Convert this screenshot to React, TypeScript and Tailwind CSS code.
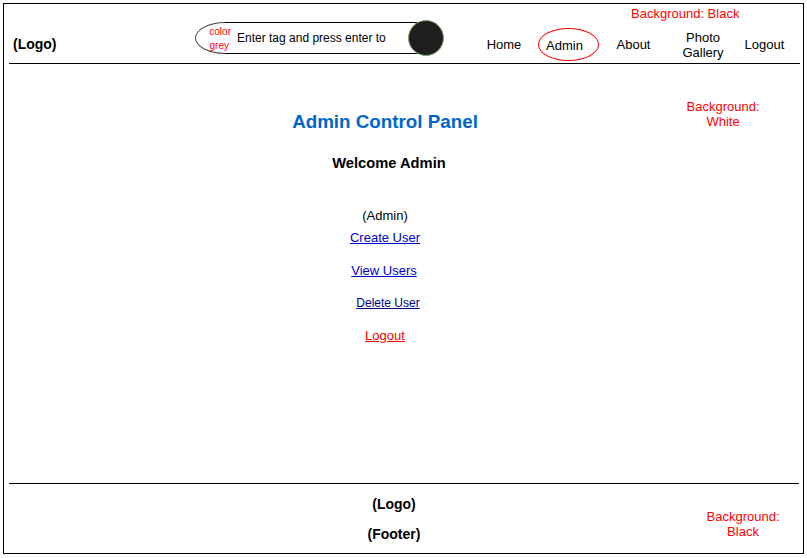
import React from "react";

const navItem = "w-[60px] text-center text-[13px] leading-[15px] text-black";

function SearchBox() {
    return (
        <div className="flex items-center h-[37px]">
            {/* left rounded cap with the colour note */}
            <div className="w-[30px] h-[32px] border border-r-0 border-[#444] rounded-l-[30px_16px] flex flex-col items-end justify-center">
                <span className="-mr-[6px] pt-[2px] text-[10px] leading-[14px] text-[#ff0000]">color</span>
                <span className="-mr-[4px] text-[10px] leading-[14px] text-[#ff0000]">grey</span>
            </div>
            <div className="w-[195px] h-[32px] border-y border-black flex items-center pl-[12px]">
                <span className="text-[12px] leading-[14px] text-black whitespace-nowrap">Enter tag and press enter to</span>
            </div>
            <div className="-ml-[12px] w-[36px] h-[36px] rounded-full bg-[#1e1e1e] border border-[#86a872]" />
        </div>
    );
}

function Header() {
    return (
        <div className="ml-[5px] mr-[3px] h-[60px] border-b border-black flex items-start">
            <div className="w-[186px] pl-[4px] mt-[32px] text-[14px] leading-[16px] font-bold text-black">(Logo)</div>
            <div className="mt-[15px]">
                <SearchBox />
            </div>
            <div className="ml-[30px] flex flex-col">
                <div className="pl-[157px] mt-[2px] text-[13px] leading-[15px] text-[#ff0000] whitespace-nowrap">Background: Black</div>
                <div className="mt-[7px] h-[33px] flex items-center">
                    <div className={navItem}>Home</div>
                    <div className="ml-[4px] w-[61px] h-[33px] border border-[#ff0000] rounded-[50%] flex items-center justify-center pt-[2px] pr-[8px] text-[13px] leading-[15px] text-black">
                        Admin
                    </div>
                    <div className="w-[69px] text-center text-[13px] leading-[15px]">About</div>
                    <div className="w-[70px] text-center text-[13px] leading-[15px]">
                        Photo
                        <br />
                        Gallery
                    </div>
                    <div className="w-[53px] text-center text-[13px] leading-[15px]">Logout</div>
                </div>
            </div>
        </div>
    );
}

function AdminPanel() {
    return (
        <div className="h-[419px] flex items-start">
            <div className="ml-[231px] w-[300px] flex flex-col items-center">
                <h1 className="mt-[47px] text-[18.8px] leading-[22px] font-bold text-[#0066cc]">Admin Control Panel</h1>
                <h2 className="mt-[22px] pl-[8px] text-[14.7px] leading-[17px] font-bold text-black">Welcome Admin</h2>
                <p className="mt-[36px] text-[13px] leading-[15px] text-black">(Admin)</p>
                <a href="#" className="mt-[7px] text-[13px] leading-[15px] text-[#0000cc] underline">Create User</a>
                <a href="#" className="mt-[18px] -ml-[2px] text-[13px] leading-[15px] text-[#0000cc] underline">View Users</a>
                <a href="#" className="mt-[18px] ml-[6px] text-[12px] leading-[14px] text-[#000080] underline">Delete User</a>
                <a href="#" className="mt-[18px] text-[13px] leading-[15px] text-[#ff0000] underline">Logout</a>
            </div>
            <div className="ml-[138px] mt-[35px] w-[100px] text-center text-[13px] leading-[15px] text-[#ff0000]">
                Background:
                <br />
                White
            </div>
        </div>
    );
}

function Footer() {
    return (
        <div className="ml-[5px] mr-[4px] h-[70px] border-t border-black flex items-start">
            <div className="ml-[335px] w-[100px] flex flex-col items-center">
                <div className="mt-[12px] text-[14px] leading-[16px] font-bold text-black">(Logo)</div>
                <div className="mt-[14px] text-[14px] leading-[16px] font-bold text-black">(Footer)</div>
            </div>
            <div className="ml-[249px] mt-[25px] w-[100px] text-center text-[13px] leading-[15px] text-[#ff0000]">
                Background:
                <br />
                Black
            </div>
        </div>
    );
}

export default function App() {
    return (
        <div className="w-[807px] h-[558px] bg-white p-[3px] font-['Liberation_Sans',Arial,sans-serif]">
            <div className="w-[801px] h-[551px] border border-black flex flex-col">
                <Header />
                <AdminPanel />
                <Footer />
            </div>
        </div>
    );
}
